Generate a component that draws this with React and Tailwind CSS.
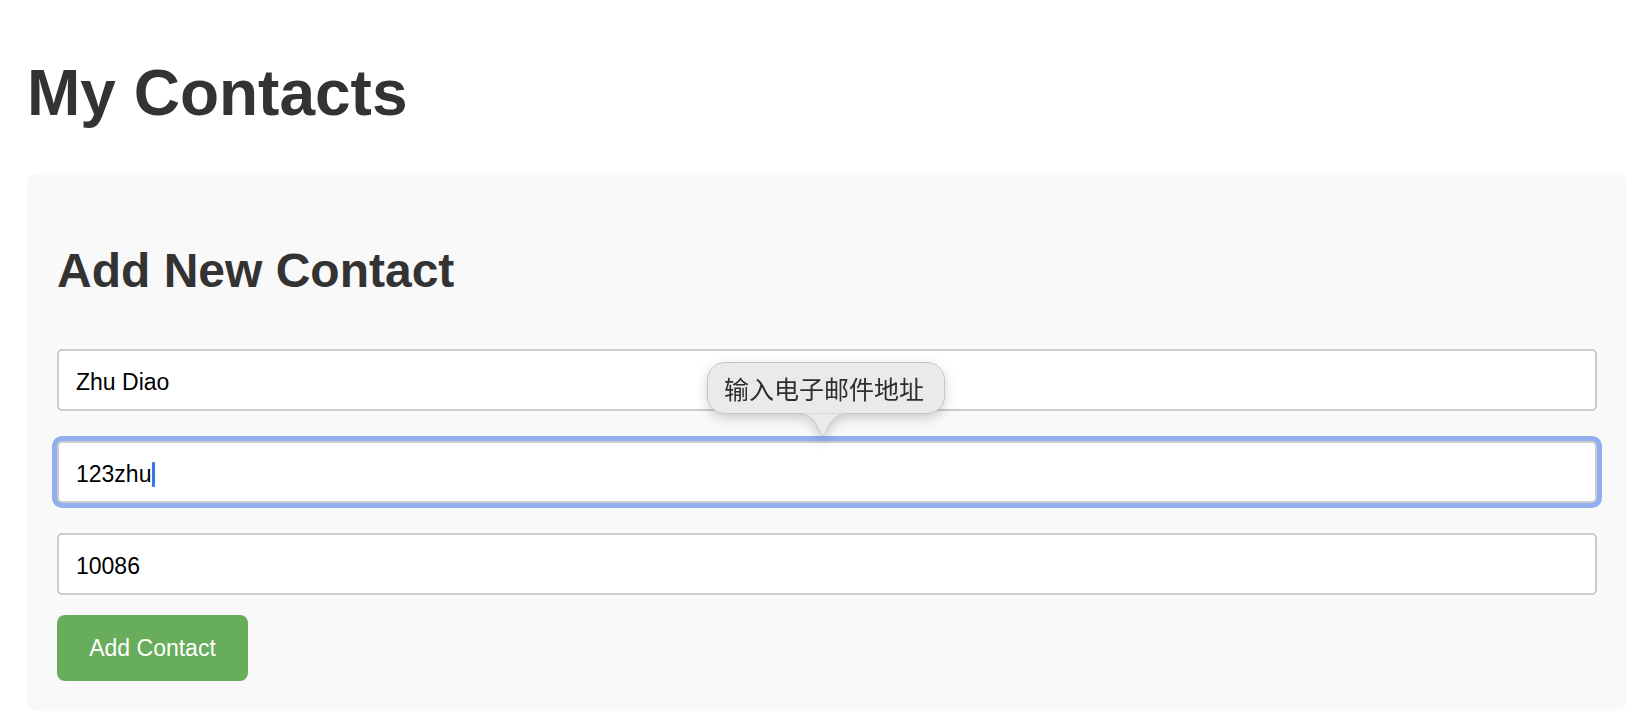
import React from "react";

const sans = { fontFamily: '"Liberation Sans", Arial, sans-serif' };

export default function App() {
  return (
    <div className="relative min-h-[728px] bg-white pl-[27px] text-[#333]" style={sans}>
      <h1 className="mt-0 pt-[56px] text-[64px] font-bold leading-[74px] text-[#333]">My Contacts</h1>

      <div className="mt-[43px] w-[1600px] rounded-[10px] bg-[#f9f9f9] p-[30px]">
        <h2 className="mt-[40px] text-[48px] font-bold leading-[55px] text-[#333]">Add New Contact</h2>

        <div className="mt-[51px] flex flex-col gap-[30px]">
          <div className="flex h-[62px] items-center rounded-[5px] border-2 border-[#cbcbcb] bg-white pl-[17px] pt-[4px] text-[23px] text-black">
            Zhu Diao
          </div>
          <div className="flex h-[62px] items-center rounded-[5px] border-2 border-[#cbcbcb] bg-white pl-[17px] pt-[4px] text-[23px] text-black shadow-[0_0_0_5px_#91aef0]">
            <span>123zhu</span>
            <span className="ml-[1px] inline-block h-[25px] w-[3px] rounded-[1px] bg-[#3a74ee]"></span>
          </div>
          <div className="flex h-[62px] items-center rounded-[5px] border-2 border-[#cbcbcb] bg-white pl-[17px] pt-[4px] text-[23px] text-black">
            10086
          </div>
        </div>

        <button className="mt-[20px] flex h-[66px] w-[191px] items-center justify-center rounded-[8px] bg-[#68ad5c] text-[23px] text-white">
          Add Contact
        </button>
      </div>

      <div className="absolute left-[707px] top-[362px] drop-shadow-[0_4px_6px_rgba(0,0,0,0.18)]">
        <div
          className="flex h-[52px] w-[238px] items-center rounded-[18px] border border-[#c6c6c6] bg-[#ebeae8] pl-[16px] text-[25px] leading-none text-[#2e2e2e]"
          style={{ fontFamily: '"Noto Sans CJK SC", "Noto Sans", sans-serif' }}
        >
          输入电子邮件地址
        </div>
        <svg
          className="absolute left-[90px] top-[51px]"
          width="52"
          height="25"
          viewBox="0 0 52 25"
        >
          <path
            d="M0 0.5 Q12 0.5 18 9 L24 21.5 Q26 24 28 21.5 L34 9 Q40 0.5 52 0.5 Z"
            fill="#ebeae8"
            stroke="none"
          />
          <path
            d="M0 0.5 Q12 0.5 18 9 L24 21.5 Q26 24 28 21.5 L34 9 Q40 0.5 52 0.5"
            fill="none"
            stroke="#c6c6c6"
            strokeWidth="1"
          />
        </svg>
      </div>
    </div>
  );
}
